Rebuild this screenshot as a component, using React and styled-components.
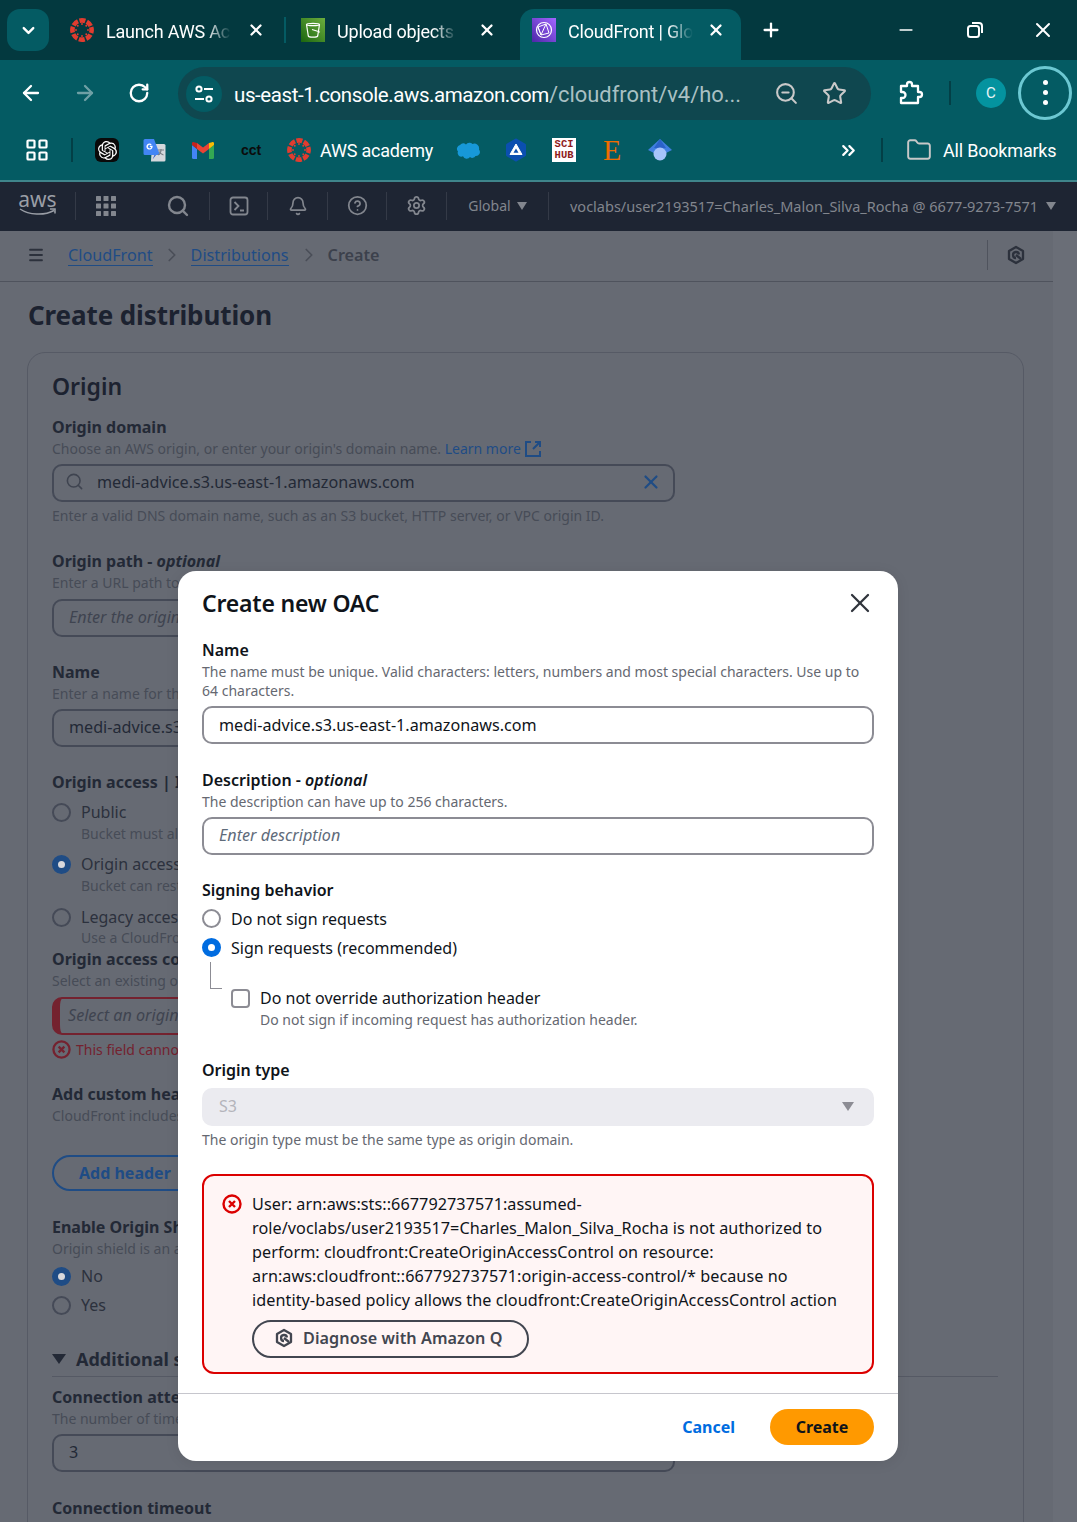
import React from 'react';
import styled, { createGlobalStyle } from 'styled-components';
import {
  ChevronDown, X, Plus, Minus, ArrowLeft, ArrowRight, RotateCw, ZoomOut, Star,
  ChevronsRight, Folder, Search, Bell, CircleHelp, Settings, ChevronRight, Menu,
} from 'lucide-react';
import { SiOpenai } from 'react-icons/si';

const uiFont = 'Roboto, "Open Sans", sans-serif';
const pageFont = '"Noto Sans", "Open Sans", sans-serif';

const GlobalStyle = createGlobalStyle`
  html, body { margin: 0; padding: 0; background: #666a73; }
  body { width: 1077px; height: 1522px; overflow: hidden; font-family: ${pageFont}; }
  * { box-sizing: border-box; }
`;

const Frame = styled.div`
  position: relative;
  width: 1077px;
  height: 1522px;
  overflow: hidden;
`;

/* browser chrome */
const TabStrip = styled.div`
  height: 60px;
  background: #03393f;
  display: flex;
  align-items: flex-start;
  padding: 9px 0 0 7px;
  font-family: ${uiFont};
`;

const TabMenu = styled.div`
  width: 42px;
  height: 42px;
  border-radius: 13px;
  background: #045b63;
  color: #fff;
  display: flex;
  align-items: center;
  justify-content: center;
  margin-right: 21px;
`;

const Tab = styled.div`
  position: relative;
  width: ${p => p.$w}px;
  height: 51px;
  padding: 0 0 9px ${p => p.$pad}px;
  display: flex;
  align-items: center;
  color: #fff;
  flex: none;
  background: ${p => (p.$active ? '#045b63' : 'transparent')};
  border-radius: 14px 14px 0 0;
`;

const TabTitle = styled.span`
  width: ${p => p.$w}px;
  margin-left: 12px;
  padding-top: 2px;
  font-size: 18px;
  letter-spacing: -0.2px;
  white-space: nowrap;
  overflow: hidden;
  mask-image: linear-gradient(to right, #000 80%, transparent 100%);
`;

const TabClose = styled.span`
  display: flex;
  margin-left: ${p => p.$ml}px;
`;

const TabSep = styled.div`
  width: 2px;
  height: 26px;
  margin-top: 8px;
  background: #045b63;
  flex: none;
  margin-right: ${p => p.$mr}px;
`;

const WindowButtons = styled.div`
  display: flex;
  align-items: center;
  height: 42px;
  color: #fff;
  flex: none;
  margin-left: ${p => p.$ml || 0}px;
`;

const WinSlot = styled.span`
  display: flex;
  justify-content: center;
  width: ${p => p.$w}px;
`;

const ToolBar = styled.div`
  height: 65px;
  background: #045b63;
  padding-left: 4px;
  display: flex;
  align-items: center;
  color: #fff;
  font-family: ${uiFont};
`;

const NavBtn = styled.span`
  width: 54px;
  display: flex;
  justify-content: center;
  flex: none;
  color: ${p => (p.$dim ? '#6fa0a5' : '#fff')};
`;

const Omnibox = styled.div`
  width: 693px;
  height: 53px;
  margin: 2px 0 0 12px;
  border-radius: 27px;
  background: #0f474f;
  display: flex;
  align-items: center;
  padding-left: 8px;
  flex: none;
`;

const SiteChip = styled.span`
  width: 36px;
  height: 36px;
  border-radius: 50%;
  background: #045b63;
  display: flex;
  align-items: center;
  justify-content: center;
  flex: none;
`;

const Url = styled.span`
  margin-left: 12px;
  padding-top: 2px;
  width: 510px;
  font-size: 20.5px;
  letter-spacing: -0.42px;
  color: #fff;
  white-space: nowrap;
  overflow: hidden;
`;

const UrlRest = styled.span`
  font-size: 21.9px;
  letter-spacing: 0;
  color: #a9c0c3;
`;

const OmniIcon = styled.span`
  display: flex;
  color: ${p => p.$c || '#c9c9c9'};
  margin-left: ${p => p.$ml}px;
`;

const ToolSep = styled.div`
  width: 2px;
  height: 24px;
  background: #033f46;
  flex: none;
  margin: 0 ${p => p.$mr}px 0 ${p => p.$ml}px;
`;

const Avatar = styled.span`
  width: 30px;
  height: 30px;
  border-radius: 50%;
  background: #04939f;
  color: #eaf6f7;
  font-size: 15px;
  display: flex;
  align-items: center;
  justify-content: center;
  flex: none;
`;

const MenuRing = styled.span`
  width: 54px;
  height: 54px;
  margin-left: 12px;
  border-radius: 50%;
  border: 3px solid #6cc8d2;
  display: flex;
  flex-direction: column;
  align-items: center;
  justify-content: center;
  gap: 5px;
  flex: none;
`;

const Dot = styled.i`
  width: 5px;
  height: 5px;
  border-radius: 50%;
  background: #fff;
`;

const BookmarkBar = styled.div`
  height: 55px;
  background: #045b63;
  display: flex;
  align-items: center;
  padding-bottom: 5px;
  color: #fff;
  font-family: ${uiFont};
  font-size: 18px;
  letter-spacing: -0.2px;
`;

const BookSlot = styled.span`
  width: 48px;
  height: 26px;
  margin-left: ${p => p.$ml || 0}px;
  display: flex;
  align-items: center;
  justify-content: center;
  flex: none;
`;

const BookText = styled.span`
  white-space: nowrap;
  flex: none;
  margin-right: ${p => p.$mr || 0}px;
  margin-left: ${p => p.$ml || 0}px;
`;

const GptBadge = styled.span`
  width: 24px;
  height: 24px;
  border-radius: 6px;
  background: #0a0a0a;
  color: #fff;
  display: flex;
  align-items: center;
  justify-content: center;
`;

const Cct = styled.span`
  color: #0b0b0b;
  font: 700 14px "Liberation Sans", sans-serif;
  letter-spacing: 0;
`;

const SciHub = styled.span`
  width: 24px;
  height: 24px;
  background: #fff;
  color: #8f1d1d;
  font: 700 10.5px/11px "Liberation Mono", monospace;
  letter-spacing: 0;
  text-align: center;
  padding-top: 1px;
`;

const OrangeE = styled.span`
  color: #ef6c00;
  font: 400 30px/26px "Liberation Serif", serif;
`;

const TealLine = styled.div`
  height: 2px;
  background: #3f858b;
`;

/* aws console, dimmed */
const ConsoleNav = styled.div`
  height: 49px;
  padding-bottom: 2px;
  background: #1e2533;
  display: flex;
  align-items: center;
  color: #82868e;
  font-size: 14px;
  white-space: nowrap;
`;

const NavSlot = styled.span`
  width: ${p => p.$w}px;
  padding-left: ${p => p.$pad || 0}px;
  display: flex;
  align-items: center;
  justify-content: center;
  flex: none;
`;

const AccountSlot = styled.span`
  padding-left: 21px;
  display: flex;
  align-items: center;
  font-size: 14.5px;
  flex: none;
`;

const NavDivider = styled.span`
  width: 1px;
  height: 28px;
  background: #343a47;
  flex: none;
`;

const AwsMark = styled.span`
  display: flex;
  flex-direction: column;
  align-items: center;
  color: #9a9ea6;
  font: 400 21px/17px ${pageFont};
  height: 30px;
`;

const Caret = styled.i`
  width: 0;
  height: 0;
  border-left: ${p => p.$s || 5}px solid transparent;
  border-right: ${p => p.$s || 5}px solid transparent;
  border-top: ${p => (p.$s ? p.$s + 3 : 8)}px solid ${p => p.$c || '#82868e'};
  flex: none;
  margin-left: ${p => p.$ml || 0}px;
`;

const Main = styled.div`
  width: 1053px;
  height: 1291px;
`;

const RightStrip = styled.div`
  position: absolute;
  left: 1053px;
  top: 231px;
  bottom: 0;
  width: 24px;
  background: #6a6e77;
`;

const CrumbBar = styled.div`
  height: 51px;
  padding: 0 0 2px 27px;
  border-bottom: 1px solid #4f535d;
  display: flex;
  align-items: center;
  font-size: 16.2px;
  color: #3a3f4a;
`;

const CrumbLink = styled.span`
  color: #1f4c85;
  border-bottom: 1px solid #1f4c85;
  line-height: 20px;
`;

const CrumbIcon = styled.span`
  display: flex;
  color: #4a4e58;
  margin: 0 ${p => p.$mr}px 0 ${p => p.$ml}px;
`;

const CrumbCurrent = styled.span`
  font-weight: 600;
  color: #3c414c;
`;

const CrumbRight = styled.div`
  margin-left: auto;
  height: 30px;
  width: 66px;
  border-left: 1px solid #4f535d;
  display: flex;
  align-items: center;
  padding-left: 18px;
  color: #2c313c;
`;

const PageTitle = styled.h1`
  margin: 14px 0 0 28px;
  font-size: 26px;
  line-height: 38px;
  font-weight: 700;
  letter-spacing: -0.1px;
  color: #1c2230;
`;

const Card = styled.div`
  margin: 18px 0 0 27px;
  width: 997px;
  height: 1300px;
  border: 1px solid #565a65;
  border-radius: 18px;
  padding: 16px 24px 0 24px;
`;

const CardTitle = styled.h2`
  margin: 0;
  font-size: 23px;
  line-height: 34px;
  font-weight: 600;
  color: #1c2230;
`;

const BgLabel = styled.div`
  margin-top: ${p => p.$mt}px;
  font-size: 16px;
  line-height: 22px;
  font-weight: 700;
  color: #232936;
  white-space: nowrap;
`;

const BgHelp = styled.div`
  margin-top: ${p => p.$mt ?? 1}px;
  font-size: 14px;
  line-height: 20px;
  color: #474c57;
  white-space: nowrap;
`;

const BgLink = styled.span`
  color: #1f4c85;
`;

const BgInput = styled.div`
  margin-top: ${p => p.$mt}px;
  width: 623px;
  height: 38px;
  border: 2px solid ${p => (p.$error ? '#74222f' : '#454a57')};
  border-left-width: ${p => (p.$error ? 8 : 2)}px;
  border-radius: 10px;
  display: flex;
  align-items: center;
  padding: 0 11px 3px ${p => (p.$error ? 8 : 15)}px;
  font-size: 16.15px;
  font-style: ${p => (p.$ph ? 'italic' : 'normal')};
  color: ${p => (p.$ph ? '#3f4450' : '#232936')};
  white-space: nowrap;
`;

const BgRadioRow = styled.div`
  margin-top: ${p => p.$mt}px;
  display: flex;
  align-items: center;
  gap: 10px;
  font-size: 16px;
  line-height: 22px;
  color: #2c313d;
  white-space: nowrap;
`;

const Radio = styled.span`
  width: 19px;
  height: 19px;
  border-radius: 50%;
  flex: none;
  border: ${p => (p.$on ? '6px' : '2px')} solid ${p => (p.$on ? p.$c : p.$off)};
  background: ${p => p.$bg};
`;

const BgIndent = styled.div`
  margin-left: 29px;
`;

const BgError = styled.div`
  margin-top: 4px;
  display: flex;
  align-items: center;
  gap: 5px;
  height: 20px;
  font-size: 14px;
  color: #74222f;
  white-space: nowrap;
`;

const BgButton = styled.div`
  margin-top: 29px;
  width: 150px;
  height: 36px;
  border: 2px solid #1f4c85;
  border-radius: 18px;
  color: #1f4c85;
  font-size: 16px;
  font-weight: 700;
  display: flex;
  align-items: center;
  padding-left: 25px;
`;

const BgSection = styled.div`
  margin-top: 30px;
  width: 946px;
  height: 31px;
  border-bottom: 1px solid #555964;
  display: flex;
  align-items: flex-start;
  gap: 10px;
  font-size: 18px;
  line-height: 26px;
  font-weight: 700;
  color: #232936;
  white-space: nowrap;
`;

const BgCaret = styled.i`
  margin-top: 8px;
  width: 0;
  height: 0;
  border-left: 7px solid transparent;
  border-right: 7px solid transparent;
  border-top: 10px solid #232936;
`;

/* modal */
const Modal = styled.div`
  position: absolute;
  left: 178px;
  top: 571px;
  width: 720px;
  height: 890px;
  background: #fff;
  border-radius: 18px;
  box-shadow: 0 2px 14px rgba(0, 0, 0, 0.08);
  color: #0f141a;
`;

const ModalHead = styled.div`
  height: 64px;
  padding: 0 22px 0 24px;
  display: flex;
  align-items: center;
  justify-content: space-between;
`;

const ModalTitle = styled.h2`
  margin: 0;
  font-size: 23px;
  line-height: 32px;
  font-weight: 600;
  letter-spacing: -0.2px;
`;

const ModalBody = styled.div`
  padding: 4px 24px 0;
`;

const Label = styled.div`
  margin-top: ${p => p.$mt || 0}px;
  font-size: 16px;
  line-height: 22px;
  font-weight: 600;
`;

const Help = styled.div`
  margin-top: ${p => p.$mt || 0}px;
  font-size: 14px;
  line-height: 19px;
  color: #656871;
`;

const Input = styled.div`
  margin-top: ${p => p.$mt}px;
  height: 38px;
  border: 2px solid #8c8c94;
  border-radius: 10px;
  display: flex;
  align-items: center;
  padding: 0 0 ${p => (p.$ph ? 2 : 0)}px 15px;
  font-size: 16.15px;
  font-style: ${p => (p.$ph ? 'italic' : 'normal')};
  color: ${p => (p.$ph ? '#5f6b7a' : '#0f141a')};
`;

const RadioList = styled.div`
  margin-top: 3px;
`;

const RadioRow = styled.div`
  height: 29px;
  display: flex;
  align-items: center;
  gap: 10px;
  font-size: 16px;
`;

const Nested = styled.div`
  position: relative;
  margin-top: 25px;
  padding-left: 29px;
  &::before {
    content: '';
    position: absolute;
    left: 8px;
    top: -25px;
    width: 11px;
    height: 26px;
    border-left: 1px solid #8c8c94;
    border-bottom: 1px solid #8c8c94;
  }
`;

const CheckRow = styled.div`
  display: flex;
  align-items: center;
  gap: 10px;
  font-size: 16px;
  line-height: 22px;
`;

const CheckBox = styled.span`
  width: 19px;
  height: 19px;
  border: 2px solid #8c8c94;
  border-radius: 4px;
  flex: none;
`;

const NestedHelp = styled(Help)`
  margin-left: 29px;
  margin-top: 1px;
`;

const Select = styled.div`
  margin-top: 7px;
  height: 38px;
  border-radius: 10px;
  background: #ebebf0;
  color: #b4b4bb;
  font-size: 16px;
  display: flex;
  align-items: center;
  justify-content: space-between;
  padding: 0 20px 2px 17px;
`;

const Alert = styled.div`
  margin-top: 25px;
  height: 200px;
  border: 2px solid #db0000;
  border-radius: 12px;
  background: #fff5f5;
  padding: 16px 0 0 18px;
  display: flex;
  gap: 10px;
`;

const AlertIcon = styled.span`
  flex: none;
  display: flex;
  height: 24px;
  align-items: center;
`;

const AlertText = styled.div`
  width: 594px;
  font-size: 16.2px;
  line-height: 24px;
  letter-spacing: 0.06px;
`;

const QButton = styled.div`
  margin-top: 8px;
  width: 277px;
  height: 38px;
  border: 2px solid #424650;
  border-radius: 19px;
  display: flex;
  align-items: center;
  gap: 9px;
  padding: 0 0 2px 20px;
  font-weight: 600;
  color: #424650;
`;

const ModalFoot = styled.div`
  margin-top: 19px;
  border-top: 1px solid #c6c6cd;
  height: 67px;
  padding: 15px 24px 0;
  display: flex;
  justify-content: flex-end;
  align-items: flex-start;
  gap: 35px;
`;

const CancelBtn = styled.span`
  line-height: 36px;
  font-size: 16px;
  font-weight: 700;
  color: #006ce0;
`;

const CreateBtn = styled.span`
  width: 104px;
  height: 36px;
  border-radius: 18px;
  background: #ff9900;
  font-size: 16px;
  font-weight: 700;
  line-height: 36px;
  text-align: center;
`;

/* drawings */
const CanvasLogo = ({ size = 24 }) => (
  <svg width={size} height={size} viewBox="0 0 24 24">
    <circle cx="12" cy="12" r="9.6" fill="none" stroke="#e13c2f" strokeWidth="4.6" strokeDasharray="5.9 1.64" transform="rotate(-17 12 12)" />
    {[0, 45, 90, 135, 180, 225, 270, 315].map(a => (
      <circle key={a} cx="12" cy="6" r="0.95" fill="#e13c2f" transform={`rotate(${a} 12 12)`} />
    ))}
  </svg>
);

const BucketFav = () => (
  <svg width="24" height="24" viewBox="0 0 24 24">
    <defs>
      <linearGradient id="bk" x1="0" y1="1" x2="1" y2="0">
        <stop offset="0" stopColor="#1b660f" />
        <stop offset="1" stopColor="#6cae3e" />
      </linearGradient>
    </defs>
    <rect width="24" height="24" fill="url(#bk)" />
    <path d="M5.5 6.5c0-1.5 13-1.5 13 0l-1.8 11.5c-.4 1.5-9 1.5-9.4 0zM5.5 6.5c0 1.6 13 1.6 13 0M11 11.5l8 2.5" fill="none" stroke="#fff" strokeWidth="1.2" />
  </svg>
);

const CloudFrontFav = () => (
  <svg width="24" height="24" viewBox="0 0 24 24">
    <defs>
      <linearGradient id="cf" x1="0" y1="1" x2="1" y2="0">
        <stop offset="0" stopColor="#4d27a8" />
        <stop offset="1" stopColor="#a166ff" />
      </linearGradient>
    </defs>
    <rect width="24" height="24" fill="url(#cf)" />
    <circle cx="12" cy="12" r="7.5" fill="none" stroke="#fff" strokeWidth="1.2" />
    <path d="M6 9l8-3 3 9-8 2zM6 9l3 8M14 6l-5 11" fill="none" stroke="#fff" strokeWidth="1" />
  </svg>
);

const TuneIcon = () => (
  <svg width="20" height="20" viewBox="0 0 20 20" fill="none" stroke="#fff" strokeWidth="2">
    <circle cx="5" cy="5" r="2.6" />
    <path d="M10 5h9M1 15h9" />
    <circle cx="15" cy="15" r="2.6" />
  </svg>
);

const ExtensionIcon = () => (
  <svg width="26" height="26" viewBox="0 0 26 26" fill="none" stroke="#fff" strokeWidth="2.3" strokeLinejoin="round">
    <path d="M3 6h6V4.5a2.5 2.5 0 0 1 5 0V6h6v6h1.5a2.5 2.5 0 0 1 0 5H20v6H3v-5h1.5a3 3 0 0 0 0-6H3z" />
  </svg>
);

const AppsIcon = () => (
  <svg width="22" height="22" viewBox="0 0 22 22" fill="none" stroke="#fff" strokeWidth="2.2">
    <rect x="1.5" y="1.5" width="7" height="7" rx="0.8" />
    <rect x="13.5" y="1.5" width="7" height="7" rx="0.8" />
    <rect x="1.5" y="13.5" width="7" height="7" rx="0.8" />
    <rect x="13.5" y="13.5" width="7" height="7" rx="0.8" />
  </svg>
);

const TranslateIcon = () => (
  <svg width="24" height="24" viewBox="0 0 24 24">
    <path d="M9 6h12a1.5 1.5 0 0 1 1.5 1.5V22a1.5 1.5 0 0 1-1.5 1.5H8z" fill="#d5d8dc" />
    <path d="M2 1h9l6 16H2a1.5 1.5 0 0 1-1.5-1.5v-13A1.5 1.5 0 0 1 2 1z" fill="#4285f4" />
    <path d="M11.5 17l-2 4.5 3.5-4.5z" fill="#2a56c6" />
    <path d="M9.6 7.8H6.8v1.3h1.4a1.7 1.7 0 1 1-.5-1.8l1-1a3.1 3.1 0 1 0 .9 2.2z" fill="#fff" />
    <path d="M15 12h6M18 11v1.2c0 2-1.4 3.8-3 4.8M16 13.5c.8 1.5 2.5 3 4.5 3.5" fill="none" stroke="#7a7f85" strokeWidth="1.1" />
  </svg>
);

const GmailIcon = () => (
  <svg width="22" height="17" viewBox="0 0 22 17">
    <path d="M0 3v12.5A1.5 1.5 0 0 0 1.5 17H5V7z" fill="#4285f4" />
    <path d="M22 3v12.5a1.5 1.5 0 0 1-1.5 1.5H17V7z" fill="#34a853" />
    <path d="M17 1l3-.8A1.3 1.3 0 0 1 22 1.5V3l-5 4z" fill="#fbbc04" />
    <path d="M5 1L11 5.5 17 1v6l-6 4.5L5 7z" fill="#ea4335" />
    <path d="M0 1.5A1.3 1.3 0 0 1 2 .2L5 1v6L0 3z" fill="#c5221f" />
  </svg>
);

const SalesforceIcon = () => (
  <svg width="24" height="17" viewBox="0 0 24 17">
    <path d="M10 2.5A4.3 4.3 0 0 1 16.5 2a4.8 4.8 0 0 1 6.5 5.5 4 4 0 0 1-3.5 6.5 3.6 3.6 0 0 1-5.5 1 4 4 0 0 1-7-.7A3.7 3.7 0 0 1 2 9.5 3.9 3.9 0 0 1 4 3a4.3 4.3 0 0 1 6-.5z" fill="#1798d8" />
  </svg>
);

const HexBadge = () => (
  <svg width="24" height="24" viewBox="0 0 24 24">
    <path d="M12 2l8.5 5v10L12 22l-8.5-5V7z" fill="#0b4fb0" stroke="#0b4fb0" strokeWidth="3" strokeLinejoin="round" />
    <path d="M12 6l6 10.5H6z" fill="#fff" stroke="#fff" strokeLinejoin="round" />
    <path d="M12 10.5l2.5 4.3h-5z" fill="#0b4fb0" />
  </svg>
);

const CapIcon = () => (
  <svg width="26" height="24" viewBox="0 0 26 24">
    <path d="M13 1l12 11-12 6L1 12z" fill="#3f7fe0" />
    <path d="M13 1l6 9H7z" fill="#2a62c9" />
    <circle cx="13" cy="16" r="6.5" fill="#a6c4fb" />
  </svg>
);

const QLogo = ({ c, size = 20 }) => (
  <svg width={size} height={size} viewBox="0 0 20 20" fill="none" stroke={c} strokeWidth="2.3" strokeLinejoin="round">
    <path d="M10 2l7 4v8l-7 4-7-4V6z" />
    <path d="M13 9.5A3 3 0 1 0 10 13" />
    <path d="M10 10l5 4" />
  </svg>
);

const ErrorIcon = ({ c, size = 20 }) => (
  <svg width={size} height={size} viewBox="0 0 20 20" fill="none" stroke={c}>
    <circle cx="10" cy="10" r="8.5" strokeWidth="2.4" />
    <path d="M7 7l6 6M13 7l-6 6" strokeWidth="2.4" />
  </svg>
);

const ConsoleIcon = () => (
  <svg width="20" height="20" viewBox="0 0 20 20" fill="none" stroke="#82868e" strokeWidth="1.8">
    <rect x="1.5" y="1.5" width="17" height="17" rx="2.5" />
    <path d="M5.5 6l4 4-4 4M11 14.5h4" />
  </svg>
);

const GridIcon = () => (
  <svg width="20" height="20" viewBox="0 0 20 20" fill="#82868e">
    {[0, 7.5, 15].flatMap(y => [0, 7.5, 15].map(x => (
      <rect key={`${x}-${y}`} x={x} y={y} width="5" height="5" rx="0.5" />
    )))}
  </svg>
);

const ExternalSvg = styled.svg`
  vertical-align: -4px;
  margin-left: 3px;
`;

const ExternalIcon = () => (
  <ExternalSvg width="18" height="18" viewBox="0 0 18 18" fill="none" stroke="#1f4c85" strokeWidth="2">
    <path d="M7 2H2v14h14v-5" />
    <path d="M11 2h5v5M16 2L9 9" />
  </ExternalSvg>
);

const AwsSmile = () => (
  <svg width="37" height="8" viewBox="0 0 37 8" fill="none" stroke="#9a9ea6" strokeWidth="1.5">
    <path d="M1 1c9 6 24 7 34 1.5M31 1h5v4.5" />
  </svg>
);

const RestoreIcon = () => (
  <svg width="18" height="18" viewBox="0 0 18 18" fill="none" stroke="#fff" strokeWidth="2">
    <rect x="2" y="5" width="11" height="11" rx="2.5" />
    <path d="M6 2h7a3 3 0 0 1 3 3v7" />
  </svg>
);

const SearchGap = styled.span`
  display: flex;
  margin: 0 13px 0 -4px;
  color: #3f4450;
`;

const ClearIcon = styled.span`
  display: flex;
  margin-left: auto;
  color: #1f4c85;
`;

const ChromeHeader = () => (
  <>
    <TabStrip>
      <TabMenu><ChevronDown size={19} strokeWidth={3} /></TabMenu>
      <Tab $w={214} $pad={0}>
        <CanvasLogo />
        <TabTitle $w={125}>Launch AWS Academy</TabTitle>
        <TabClose $ml={16}><X size={18} strokeWidth={3} /></TabClose>
      </Tab>
      <TabSep $mr={15} />
      <Tab $w={219} $pad={0}>
        <BucketFav />
        <TabTitle $w={120}>Upload objects - S3</TabTitle>
        <TabClose $ml={21}><X size={18} strokeWidth={3} /></TabClose>
      </Tab>
      <Tab $w={221} $pad={12} $active>
        <CloudFrontFav />
        <TabTitle $w={125}>CloudFront | Global</TabTitle>
        <TabClose $ml={14}><X size={18} strokeWidth={3} /></TabClose>
      </Tab>
      <WindowButtons>
        <WinSlot $w={60}><Plus size={22} strokeWidth={2.5} /></WinSlot>
      </WindowButtons>
      <WindowButtons $ml={71}>
        <WinSlot $w={68}><Minus size={20} strokeWidth={2} /></WinSlot>
        <WinSlot $w={69}><RestoreIcon /></WinSlot>
        <WinSlot $w={68}><X size={24} strokeWidth={2} /></WinSlot>
      </WindowButtons>
    </TabStrip>
    <ToolBar>
      <NavBtn><ArrowLeft size={24} strokeWidth={2.3} /></NavBtn>
      <NavBtn $dim><ArrowRight size={24} strokeWidth={2.3} /></NavBtn>
      <NavBtn><RotateCw size={22} strokeWidth={2.5} /></NavBtn>
      <Omnibox>
        <SiteChip><TuneIcon /></SiteChip>
        <Url>us-east-1.console.aws.amazon.com<UrlRest>/cloudfront/v4/ho...</UrlRest></Url>
        <OmniIcon $ml={30}><ZoomOut size={25} strokeWidth={2} /></OmniIcon>
        <OmniIcon $ml={23}><Star size={25} strokeWidth={2} /></OmniIcon>
      </Omnibox>
      <OmniIcon $ml={27} $c="#fff"><ExtensionIcon /></OmniIcon>
      <ToolSep $ml={25} $mr={25} />
      <Avatar>C</Avatar>
      <MenuRing><Dot /><Dot /><Dot /></MenuRing>
    </ToolBar>
    <BookmarkBar>
      <BookSlot $ml={13}><AppsIcon /></BookSlot>
      <ToolSep $ml={10} $mr={10} />
      <BookSlot><GptBadge><SiOpenai size={19} /></GptBadge></BookSlot>
      <BookSlot><TranslateIcon /></BookSlot>
      <BookSlot><GmailIcon /></BookSlot>
      <BookSlot><Cct>cct</Cct></BookSlot>
      <BookSlot><CanvasLogo /></BookSlot>
      <BookText $mr={11} $ml={-3}>AWS academy</BookText>
      <BookSlot><SalesforceIcon /></BookSlot>
      <BookSlot><HexBadge /></BookSlot>
      <BookSlot><SciHub>SCI<br />HUB</SciHub></BookSlot>
      <BookSlot><OrangeE>E</OrangeE></BookSlot>
      <BookSlot><CapIcon /></BookSlot>
      <BookSlot $ml={140}><ChevronsRight size={21} strokeWidth={2.5} /></BookSlot>
      <ToolSep $ml={9} $mr={23} />
      <Folder size={26} strokeWidth={1.8} color="#c8c8c8" />
      <BookText $ml={11}>All Bookmarks</BookText>
    </BookmarkBar>
    <TealLine />
  </>
);

const ConsoleBar = () => (
  <ConsoleNav>
    <NavSlot $w={75}><AwsMark>aws<AwsSmile /></AwsMark></NavSlot>
    <NavDivider />
    <NavSlot $w={60}><GridIcon /></NavSlot>
    <NavSlot $w={73} $pad={11}><Search size={24} strokeWidth={2.4} /></NavSlot>
    <NavDivider />
    <NavSlot $w={57}><ConsoleIcon /></NavSlot>
    <NavDivider />
    <NavSlot $w={59}><Bell size={20} strokeWidth={2} /></NavSlot>
    <NavDivider />
    <NavSlot $w={58}><CircleHelp size={21} strokeWidth={2} /></NavSlot>
    <NavDivider />
    <NavSlot $w={59}><Settings size={21} strokeWidth={2} /></NavSlot>
    <NavDivider />
    <NavSlot $w={101}>Global<Caret $ml={6} /></NavSlot>
    <NavDivider />
    <AccountSlot>voclabs/user2193517=Charles_Malon_Silva_Rocha @ 6677-9273-7571<Caret $ml={8} /></AccountSlot>
  </ConsoleNav>
);

const BackgroundPage = () => (
  <Main>
    <CrumbBar>
      <Menu size={18} strokeWidth={2.4} color="#2c313c" />
      <CrumbIcon $ml={0} $mr={23} />
      <CrumbLink>CloudFront</CrumbLink>
      <CrumbIcon $ml={8} $mr={8}><ChevronRight size={22} strokeWidth={1.8} /></CrumbIcon>
      <CrumbLink>Distributions</CrumbLink>
      <CrumbIcon $ml={9} $mr={8}><ChevronRight size={22} strokeWidth={1.8} /></CrumbIcon>
      <CrumbCurrent>Create</CrumbCurrent>
      <CrumbRight><QLogo c="#2c313c" /></CrumbRight>
    </CrumbBar>
    <PageTitle>Create distribution</PageTitle>
    <Card>
      <CardTitle>Origin</CardTitle>
      <BgLabel $mt={13}>Origin domain</BgLabel>
      <BgHelp>Choose an AWS origin, or enter your origin's domain name. <BgLink>Learn more</BgLink><ExternalIcon /></BgHelp>
      <BgInput $mt={5}>
        <SearchGap><Search size={19} /></SearchGap>
        medi-advice.s3.us-east-1.amazonaws.com
        <ClearIcon><X size={22} strokeWidth={2.4} /></ClearIcon>
      </BgInput>
      <BgHelp $mt={4}>Enter a valid DNS domain name, such as an S3 bucket, HTTP server, or VPC origin ID.</BgHelp>
      <BgLabel $mt={24}>Origin path - <em>optional</em></BgLabel>
      <BgHelp>Enter a URL path to append to the origin domain name for origin requests.</BgHelp>
      <BgInput $mt={6} $ph>Enter the origin path</BgInput>
      <BgLabel $mt={24}>Name</BgLabel>
      <BgHelp>Enter a name for this origin.</BgHelp>
      <BgInput $mt={5}>medi-advice.s3.us-east-1.amazonaws.com</BgInput>
      <BgLabel $mt={24}>Origin access | Info</BgLabel>
      <BgRadioRow $mt={8}><Radio $off="#454a57" />Public</BgRadioRow>
      <BgIndent><BgHelp>Bucket must allow public access.</BgHelp></BgIndent>
      <BgRadioRow $mt={9}><Radio $on $c="#1f4c85" $bg="#d8d8dc" />Origin access control settings</BgRadioRow>
      <BgIndent><BgHelp>Bucket can restrict access to only CloudFront.</BgHelp></BgIndent>
      <BgRadioRow $mt={10}><Radio $off="#454a57" />Legacy access identities</BgRadioRow>
      <BgIndent><BgHelp $mt={0}>Use a CloudFront origin access identity (OAI).</BgHelp></BgIndent>
      <BgLabel $mt={0}>Origin access control</BgLabel>
      <BgHelp>Select an existing origin access control.</BgHelp>
      <BgInput $mt={6} $ph $error>Select an origin access control</BgInput>
      <BgError><ErrorIcon c="#74222f" size={19} />This field cannot be empty</BgError>
      <BgLabel $mt={24}>Add custom header - optional</BgLabel>
      <BgHelp>CloudFront includes this header in all requests.</BgHelp>
      <BgButton>Add header</BgButton>
      <BgLabel $mt={25}>Enable Origin Shield</BgLabel>
      <BgHelp>Origin shield is an additional caching layer.</BgHelp>
      <BgRadioRow $mt={6}><Radio $on $c="#1f4c85" $bg="#d8d8dc" />No</BgRadioRow>
      <BgRadioRow $mt={7}><Radio $off="#454a57" />Yes</BgRadioRow>
      <BgSection><BgCaret />Additional settings</BgSection>
      <BgLabel $mt={9}>Connection attempts</BgLabel>
      <BgHelp>The number of times that CloudFront attempts to connect.</BgHelp>
      <BgInput $mt={5}>3</BgInput>
      <BgLabel $mt={25}>Connection timeout</BgLabel>
    </Card>
  </Main>
);

const OacModal = () => (
  <Modal>
    <ModalHead>
      <ModalTitle>Create new OAC</ModalTitle>
      <X size={32} strokeWidth={1.7} color="#30343c" />
    </ModalHead>
    <ModalBody>
      <Label>Name</Label>
      <Help $mt={1}>The name must be unique. Valid characters: letters, numbers and most special characters. Use up to 64 characters.</Help>
      <Input $mt={6}>medi-advice.s3.us-east-1.amazonaws.com</Input>
      <Label $mt={25}>Description - <em>optional</em></Label>
      <Help $mt={1}>The description can have up to 256 characters.</Help>
      <Input $mt={6} $ph>Enter description</Input>
      <Label $mt={24}>Signing behavior</Label>
      <RadioList>
        <RadioRow><Radio $off="#8c8c94" $bg="#fff" />Do not sign requests</RadioRow>
        <RadioRow><Radio $on $c="#006ce0" $bg="#fff" />Sign requests (recommended)</RadioRow>
      </RadioList>
      <Nested>
        <CheckRow><CheckBox />Do not override authorization header</CheckRow>
        <NestedHelp>Do not sign if incoming request has authorization header.</NestedHelp>
      </Nested>
      <Label $mt={30}>Origin type</Label>
      <Select>S3<Caret $c="#8c8c94" $s={6} /></Select>
      <Help $mt={4}>The origin type must be the same type as origin domain.</Help>
      <Alert>
        <AlertIcon><ErrorIcon c="#db0000" /></AlertIcon>
        <AlertText>
          User: arn:aws:sts::667792737571:assumed-role/voclabs/user2193517=Charles_Malon_Silva_Rocha is not authorized to perform: cloudfront:CreateOriginAccessControl on resource: arn:aws:cloudfront::667792737571:origin-access-control/* because no identity-based policy allows the cloudfront:CreateOriginAccessControl action
          <QButton><QLogo c="#424650" />Diagnose with Amazon Q</QButton>
        </AlertText>
      </Alert>
    </ModalBody>
    <ModalFoot>
      <CancelBtn>Cancel</CancelBtn>
      <CreateBtn>Create</CreateBtn>
    </ModalFoot>
  </Modal>
);

const App = () => (
  <Frame>
    <GlobalStyle />
    <ChromeHeader />
    <ConsoleBar />
    <BackgroundPage />
    <RightStrip />
    <OacModal />
  </Frame>
);

export default App;
